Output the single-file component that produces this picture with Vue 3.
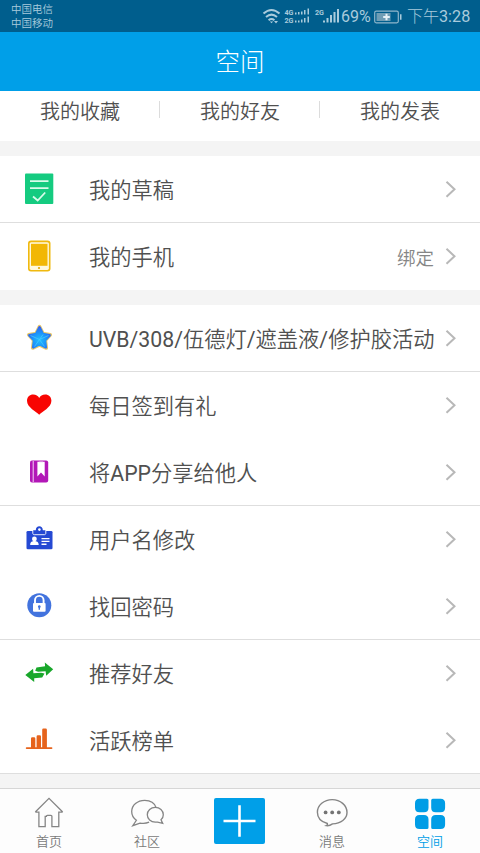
<script setup>
const tabs = ['我的收藏', '我的好友', '我的发表']
const groups = [
  [
    { icon: 'draft', label: '我的草稿', line: true },
    { icon: 'phone', label: '我的手机', value: '绑定' },
  ],
  [
    { icon: 'star', label: 'UVB/308/伍德灯/遮盖液/修护胶活动', line: true },
    { icon: 'heart', label: '每日签到有礼' },
    { icon: 'book', label: '将APP分享给他人', line: true },
    { icon: 'card', label: '用户名修改' },
    { icon: 'lock', label: '找回密码', line: true },
    { icon: 'swap', label: '推荐好友' },
    { icon: 'bars', label: '活跃榜单', line: true },
  ],
]
// Latin runs carry a regular weight beside the lighter Chinese text.
const runs = (s) => s.split(/([A-Z0-9/]+)/).filter(Boolean)
const isLatin = (s) => /^[A-Z0-9/]/.test(s)
</script>

<template>
  <div class="screen">
    <div class="status">
      <div class="carriers"><span>中国电信</span><span>中国移动</span></div>
      <svg class="signals" width="80" height="32" viewBox="0 0 80 32">
        <g fill="none" stroke="#a9cbdc" stroke-width="2">
          <path d="M12.500 13.500Q20.500 6.500 28.500 13.500M15 17Q20.500 12.200 26 17M17.600 20.200Q20.500 17.800 23.400 20.200" transform="translate(-10 0)" />
        </g>
        <path d="M8.800 21.500h3.400l-1.700 1.700zM13 21h4l-2 2.500z" fill="#a9cbdc" />
        <g class="net">
          <text x="23.500" y="15" textLength="9" lengthAdjust="spacingAndGlyphs">4G</text>
          <text x="23.500" y="23" textLength="9" lengthAdjust="spacingAndGlyphs">2G</text>
          <text x="54" y="15" textLength="9" lengthAdjust="spacingAndGlyphs">2G</text>
        </g>
        <path d="M34 12.500h1.500v2H34zM37 12h1.500v2.500H37zM40 11.500h1.500v3H40zM43 10h1.500v4.500H43zM46.500 8.500H48v6h-1.500zM34 20.500h1.500v2H34zM37 20.500h1.500v2H37zM40 19.500h1.500v3H40zM43 18h1.500v4.500H43zM46.500 16.500H48v6h-1.500zM62 20.500h2v2h-2zM65.500 18h2v4.500h-2zM69 15h2v7.500h-2zM72.500 12h2v10.500h-2zM76 9h2v13.500h-2z" fill="#a9cbdc" />
      </svg>
      <span class="percent">69%</span>
      <svg class="battery" width="28" height="14" viewBox="0 0 28 14">
        <rect x=".7" y="1.200" width="23.600" height="11.600" rx="1.500" fill="none" stroke="#8fb6cb" stroke-width="1.200" />
        <path d="M2.500 3h14v8h-14z" fill="#6f9db5" />
        <path d="M26 4.200h1.500v5.600H26z" fill="#a9cbdc" />
        <path d="M12.500 3.700v6.600M9.200 7h6.600" stroke="#e5f2f8" stroke-width="2" />
      </svg>
      <span class="time">下午<span class="latin">3:28</span></span>
    </div>

    <header class="title">空间</header>

    <div class="tabs">
      <div v-for="t in tabs" :key="t" class="tab">{{ t }}</div>
    </div>

    <section v-for="(g, i) in groups" :key="i" class="group">
      <div v-for="r in g" :key="r.icon" class="row" :class="{ line: r.line }">
        <svg class="icon" width="40" height="40" viewBox="0 0 40 40">
          <g v-if="r.icon === 'draft'">
            <rect x="6" y="4.500" width="28.300" height="30.500" rx="1" fill="#15cb80" />
            <path d="M11 12.200h18.500M11 19.200h18.500M14 27.500l4.700 4 7.500-8" fill="none" stroke="#d9fbea" stroke-width="1.800" />
          </g>
          <g v-else-if="r.icon === 'phone'">
            <rect x="9" y="4.500" width="22.500" height="31" rx="3" fill="#f0b90f" />
            <rect x="10.600" y="6.200" width="19.300" height="27.700" rx="1.600" fill="#fff8dc" />
            <rect x="12" y="7.800" width="16.500" height="22" fill="#f2b705" />
            <circle cx="20" cy="32" r="1.100" fill="#e0a800" />
          </g>
          <g v-else-if="r.icon === 'star'">
            <defs>
              <radialGradient id="starFill" gradientUnits="userSpaceOnUse" cx="20.500" cy="22" r="14">
                <stop offset="0" stop-color="#22c0fb" />
                <stop offset=".5" stop-color="#1a94fa" />
                <stop offset="1" stop-color="#3a58ea" />
              </radialGradient>
            </defs>
            <path d="M20.500 8.600L24 15.500L31.300 16.800L26.300 22.300L27.300 30L20.500 26.800L13.700 30L14.700 22.300L9.700 16.800L17 15.500Z" fill="#e8c96a" stroke="#e8c96a" stroke-width="3.600" stroke-linejoin="round" />
            <path d="M20.500 9.400L23.900 16.100L30.600 17.300L25.900 22.300L26.800 29.300L20.500 26.200L14.200 29.300L15.100 22.300L10.400 17.300L17.100 16.100Z" fill="url(#starFill)" stroke="url(#starFill)" stroke-width="2.600" stroke-linejoin="round" />
            <path d="M20.500 21.500L24 16.500M20.500 21.500l9-4M20.500 21.500l5 7M20.500 21.500l-5 7M20.500 21.500l-9-4" stroke="#49ccff" stroke-width=".7" />
          </g>
          <path v-else-if="r.icon === 'heart'" d="M20.200 29.700C17.600 26.600 8 22.700 8 15.800c0-3.900 2.700-6.300 6.200-6.300 2.800 0 4.900 1.400 6 3.500 1.100-2.100 3.200-3.500 6-3.500 3.500 0 6.200 2.400 6.200 6.300 0 6.900-9.600 10.800-12.200 13.900z" fill="#f80502" />
          <g v-else-if="r.icon === 'book'">
            <rect x="11" y="8.500" width="18.200" height="22" rx="2" fill="#b217b7" />
            <path d="M14.200 9v21" stroke="#f4d4f5" stroke-width="1" />
            <path d="M18.400 9.800h7.300v14.800L22 20.500l-3.600 4.100z" fill="#fff" />
            <path d="M20.200 9.800h3.800" stroke="#e7b6ea" stroke-width=".7" />
          </g>
          <g v-else-if="r.icon === 'card'">
            <rect x="7.500" y="12" width="26" height="18.200" rx="1.300" fill="#2549d3" />
            <path d="M14.200 11.200h2.600c-.2-5.300 7.200-5.300 7 0h2.600v2.700c0 .8-.6 1.300-1.300 1.300h-9.600c-.8 0-1.300-.5-1.300-1.300z" fill="#2549d3" />
            <path d="M13.800 12v2.200c0 1 .6 1.500 1.500 1.500h10c.9 0 1.500-.5 1.500-1.500V12" fill="none" stroke="#fff" stroke-width=".9" />
            <circle cx="20.400" cy="10.600" r="1.300" fill="#fff" />
            <circle cx="15.400" cy="19.900" r="2.400" fill="#fff" />
            <path d="M11.200 26c0-3.100 2.100-3.900 4.200-3.900s4.300.8 4.300 3.900zM22.500 18.900h8v1.300h-8zM22.500 21.700h8V23h-8zM22.500 24.600h5v1.300h-5z" fill="#fff" />
          </g>
          <g v-else-if="r.icon === 'lock'">
            <circle cx="20.300" cy="19.300" r="12" fill="#4273de" />
            <path d="M16 18.500v-4.300a4.300 4.300 0 0 1 8.600 0v4.300" fill="none" stroke="#fff" stroke-width="1.900" />
            <rect x="14" y="17" width="12.600" height="8.800" rx="1" fill="#fff" />
            <path d="M20.300 19.200a1.400 1.400 0 0 1 .7 2.600v2h-1.400v-2a1.400 1.400 0 0 1 .7-2.600z" fill="#4273de" />
          </g>
          <g v-else-if="r.icon === 'swap'" fill="#19a72b">
            <path d="M34.200 16.300l-8.400-6.800.3 3.700-8.600 1.300-1.300 3.200 2.900 1 7.500-.5.600 4.500z" />
            <path d="M6.300 21.900l8.900 7.200v-3.800l8-.9 2.300-3.900-3.500-.7-7.600.4-.3-4.500z" />
          </g>
          <g v-else fill="#e6631c">
            <path d="M12 28v-9.500q0-1.200 1.200-1.200h1.900q1.200 0 1.200 1.200V28zM17.600 28V16.400q0-1.200 1.200-1.200h2q1.200 0 1.200 1.200V28zM23.200 28V9.800q0-1.200 1.200-1.200h2.300q1.200 0 1.200 1.200V28z" />
            <rect x="6.800" y="27.200" width="26.600" height="1.900" rx=".8" />
          </g>
        </svg>
        <span class="label"><span v-for="(s, k) in runs(r.label)" :key="k" :class="{ latin: isLatin(s) }">{{ s }}</span></span>
        <span v-if="r.value" class="value">{{ r.value }}</span>
        <svg class="chevron" width="12" height="18" viewBox="0 0 12 18">
          <path d="M1.500 1.800L9.500 9.300l-8 7.500" fill="none" stroke="#b8b8b8" stroke-width="2" />
        </svg>
      </div>
    </section>

    <nav class="nav">
      <div class="item home">
        <svg width="34" height="34" viewBox="0 0 34 34">
          <path d="M3.300 17L17 3.300 30.700 17M3.300 17.200h3.600v14.500h6.300V21.300h1.200q0-1 1-1h3.500q1 0 1 1v10.400h6.900V17.200h3.900" fill="none" stroke="#858585" stroke-width="1.300" />
        </svg>
        <span>首页</span>
      </div>
      <div class="item community">
        <svg width="34" height="34" viewBox="0 0 34 34">
          <path d="M26 12.500C24.500 7.600 19.800 5.300 14.700 5.300 7.500 5.300 1.700 10.100 1.700 16.600c0 3.700 1.700 6.700 4.700 8.700L2.800 30.700l7.200-2.600c3.200.6 6.300.4 9.100-.9" fill="none" stroke="#858585" stroke-width="1.300" />
          <path d="M31 24.800c1.700-1.400 2.300-3.200 2.300-5 0-4.200-3.500-7.400-8-7.400s-8 3.200-8 7.400c0 4.200 3.500 7.300 8 7.300h2.200l5.200 1.300z" fill="none" stroke="#858585" stroke-width="1.300" />
        </svg>
        <span>社区</span>
      </div>
      <div class="add">
        <svg width="51" height="46" viewBox="0 0 51 46">
          <path d="M25.500 7.300v31.400M9.500 23h32" stroke="#fff" stroke-width="2.600" />
        </svg>
      </div>
      <div class="item message">
        <svg width="34" height="34" viewBox="0 0 34 34">
          <path d="M11.300 30.600c2 .3 4.200-.3 6.200-1.700C25.800 28.600 32 23.800 32 17.500 32 10.300 25.400 4.600 17.200 4.600S2.400 10.300 2.400 17.300c0 5.600 4 9.700 10 11.200.2.900-.1 1.600-1.100 2.100z" fill="none" stroke="#858585" stroke-width="1.400" />
          <g fill="#747474"><circle cx="10.600" cy="17.400" r="1.900" /><circle cx="17.200" cy="17.400" r="1.900" /><circle cx="23.800" cy="17.400" r="1.900" /></g>
        </svg>
        <span>消息</span>
      </div>
      <div class="item space">
        <svg width="34" height="34" viewBox="0 0 34 34" fill="#009de6">
          <path d="M6.500 3.700H14q1.500 0 1.500 1.500v7.500q0 4.500-4.500 4.500H6.500Q2 17.200 2 12.700V8.200q0-4.500 4.500-4.500zM19.700 3.700h7.900q4.500 0 4.500 4.500v4.500q0 4.500-4.500 4.500h-4.900q-4.500 0-4.500-4.500V5.200q0-1.500 1.500-1.500zM6.500 19.900H11q4.500 0 4.500 4.500v8q0 1.500-1.500 1.500H6.500Q2 33.900 2 29.400v-5q0-4.500 4.500-4.500zM22.700 19.900h4.900q4.500 0 4.500 4.500v5q0 4.500-4.500 4.500h-7.900q-1.500 0-1.500-1.500v-8q0-4.500 4.500-4.500z" />
        </svg>
        <span>空间</span>
      </div>
    </nav>
  </div>
</template>

<style>
body {
  margin: 0;
}
</style>

<style scoped>
.screen {
  width: 480px;
  height: 853px;
  overflow: hidden;
  display: flex;
  flex-direction: column;
  background: #f4f4f4;
  color: #505050;
  font-family: Roboto, "Noto Sans CJK SC", sans-serif;
  font-weight: 350;
}
.latin {
  font-weight: 400;
}
.status {
  flex: none;
  height: 32px;
  display: flex;
  align-items: center;
  background: #005e8d;
  color: #a9cbdc;
}
.carriers {
  width: 250px;
  padding: 2px 0 0 11px;
  display: flex;
  flex-direction: column;
  font-size: 10.5px;
  line-height: 14px;
}
.signals {
  flex: none;
}
.net {
  fill: #a9cbdc;
  font: bold 8px Roboto, sans-serif;
}
.percent {
  width: 33px;
  padding-top: 2px;
  font-size: 16px;
  line-height: 30px;
  font-weight: 400;
}
.battery {
  flex: none;
  margin-top: 1px;
}
.time {
  margin-left: 5px;
  padding-top: 1px;
  font-size: 16px;
  line-height: 30px;
  font-weight: 300;
  white-space: nowrap;
}
.time .latin {
  font-size: 16.2px;
}
.title {
  flex: none;
  height: 59px;
  line-height: 62px;
  text-align: center;
  font-size: 24.5px;
  font-weight: 300;
  color: #fff;
  background: #009fe8;
}
.tabs {
  flex: none;
  height: 50px;
  display: flex;
  background: #fff;
}
.tab {
  flex: 1;
  text-align: center;
  font-size: 20px;
  line-height: 42px;
  background: linear-gradient(#dcdcdc, #dcdcdc) no-repeat right 10px / 1px 17px;
}
.tab:last-child {
  background: none;
}
.group {
  flex: none;
  margin-top: 15px;
  background: #fff;
}
.row {
  height: 67px;
  box-sizing: border-box;
  border-bottom: 1px solid transparent;
  padding: 0 23px 0 19px;
  display: flex;
  align-items: center;
}
.row.line {
  border-bottom-color: #dedede;
}
.icon {
  flex: none;
}
.label {
  flex: 1;
  margin-left: 30px;
  padding-top: 4px;
  font-size: 21.27px;
  line-height: 30px;
  white-space: nowrap;
}
.value {
  margin-right: 11px;
  padding-top: 2px;
  font-size: 18.5px;
  color: #868686;
}
.chevron {
  flex: none;
}
.nav {
  flex: none;
  height: 65px;
  box-sizing: border-box;
  margin-top: 14px;
  padding: 0 32px;
  border-top: 1px solid #d6d6d6;
  background: #fdfdfd;
  display: flex;
  align-items: flex-start;
}
.item {
  width: 34px;
  padding-top: 6px;
  display: flex;
  flex-direction: column;
  align-items: center;
  font-size: 13px;
  line-height: 18px;
  color: #7a7a7a;
}
.item span {
  margin-top: 4px;
  white-space: nowrap;
}
.community {
  margin-left: 64px;
}
.add {
  width: 51px;
  height: 46px;
  margin: 9px 0 0 50px;
  border-radius: 2px;
  background: #009fe8;
}
.message {
  margin-left: 50px;
}
.space {
  margin-left: 64px;
  color: #009de6;
}
</style>
